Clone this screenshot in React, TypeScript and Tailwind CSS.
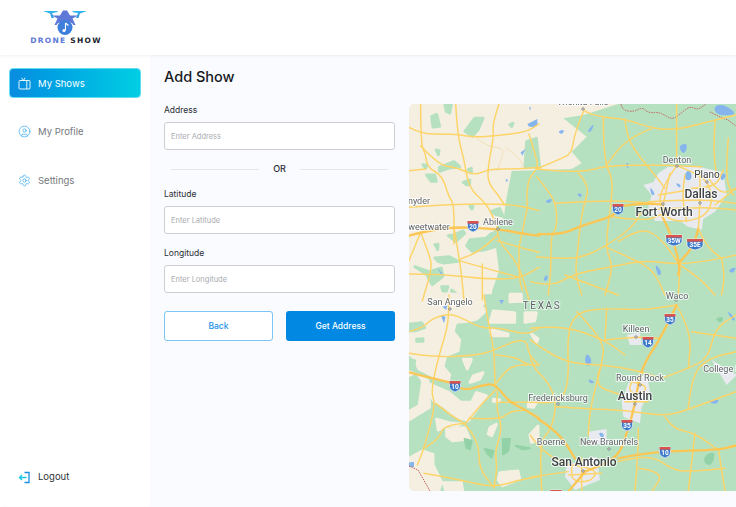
import { CircleUser, Settings } from "lucide-react";

// turns "M x y L x y..." point lists into rounded curves, closes blobs that end in Z
function smooth(d: string) {
  return d
    .split("M")
    .filter((part) => part.trim())
    .map((part) => {
      const closed = part.includes("Z");
      const nums = (part.match(/-?\d+(\.\d+)?/g) ?? []).map(Number);
      const pts: number[][] = [];
      for (let i = 0; i + 1 < nums.length; i += 2) pts.push([nums[i], nums[i + 1]]);
      if (closed) {
        const mid = (a: number[], b: number[]) => [(a[0] + b[0]) / 2, (a[1] + b[1]) / 2];
        const start = mid(pts[pts.length - 1], pts[0]);
        let out = `M${start[0]} ${start[1]}`;
        pts.forEach((p, i) => {
          const m = mid(p, pts[(i + 1) % pts.length]);
          out += `Q${p[0]} ${p[1]} ${m[0]} ${m[1]}`;
        });
        return out + "Z";
      }
      let out = `M${pts[0][0]} ${pts[0][1]}`;
      for (let i = 1; i < pts.length - 1; i++) {
        const mx = (pts[i][0] + pts[i + 1][0]) / 2;
        const my = (pts[i][1] + pts[i + 1][1]) / 2;
        out += `Q${pts[i][0]} ${pts[i][1]} ${mx} ${my}`;
      }
      const last = pts[pts.length - 1];
      return out + `L${last[0]} ${last[1]}`;
    })
    .join("");
}

// east half of the map, coords from the zoomed crops
const TOP_ROADS = [
  "M535 40L535 50L595 68L660 72L740 100L815 105L930 75L993 60",
  "M535 50L510 110L500 175L470 190L395 222",
  "M395 222L520 235L603 212L740 210L815 212L890 215",
  "M450 325L620 315L750 325",
  "M395 245L440 300L455 340L455 400L438 420L438 520L430 600",
  "M595 68L595 130L603 212L622 250L620 315L600 455L625 515L600 600",
  "M660 72L665 130L715 200L750 240L780 280",
  "M740 100L665 130L603 212",
  "M815 27L815 105L815 212",
  "M930 75L925 170L935 240",
  "M520 235L555 270L535 335L525 395L520 450L510 535L530 600",
  "M345 550L430 580L510 535L625 515L720 495L825 510L950 490L993 480",
  "M395 485L440 490L525 490L600 455L680 400L710 350",
  "M600 455L680 490L745 525L780 600",
  "M620 365L720 380L775 355",
  "M825 510L885 550L930 600",
  "M825 510L820 600",
  "M950 490L960 540L950 600",
  "M880 400L900 450L950 490",
  "M970 130L960 250L985 300",
  "M930 330L993 280",
  "M480 540L560 570L640 600",
  "M640 440L700 400L760 420L825 510",
];

// Dallas / Fort Worth knot, drawn on top of the grey city area
const DFW_ROADS = [
  "M840 240L830 300L845 380",
  "M795 235L780 300L770 360",
  "M730 320L885 312L993 325",
  "M885 225L885 330L880 400",
  "M730 345L885 335L993 345",
  "M815 212L775 270L760 330L790 375L850 380L905 360L925 310L905 255L860 230L815 212",
  "M905 240L940 300L993 280",
  "M860 280L930 280L955 225",
  "M760 300L850 285",
];

const TOP_HIGHWAYS = [
  "M400 417L465 420L530 392L620 365L640 345",
  "M640 335L700 325L770 328",
  "M770 360L800 420L825 510L820 540",
  "M880 400L870 450L825 500",
];

const BOTTOM_ROADS = [
  "M360 125L375 210L430 260L455 325L440 400L405 440L410 590",
  "M375 100L470 90L600 135L660 180",
  "M365 125L400 155L490 205L600 210L690 225L770 250",
  "M490 205L485 120L515 50L605 40L720 45L815 30",
  "M515 50L600 135L590 210L555 340L550 420",
  "M600 135L695 125L765 130",
  "M605 40L600 135",
  "M490 205L490 280L455 325L380 322",
  "M590 210L560 270L650 300",
  "M455 335L550 342L660 345L780 365L860 340L993 290",
  "M780 365L800 400L870 415L940 465",
  "M870 415L860 500L850 590",
  "M850 340L860 240L910 190L993 170",
  "M770 250L850 220L910 190L930 100L993 60",
  "M815 30L860 110L850 220",
  "M860 110L993 130",
  "M375 420L410 470L490 510",
  "M350 550L490 530",
  "M640 500L730 475L805 525L850 530L960 520",
  "M700 400L700 460L690 590",
  "M940 465L990 450",
  "M940 460L960 590",
  "M700 520L780 530L740 590",
  "M500 510L580 520L560 560L500 560L500 510",
  "M530 490L530 590",
  "M490 540L590 535",
  "M680 260L730 270L710 300L670 290L680 260",
  "M660 320L730 320",
];

const BOTTOM_HIGHWAYS = [
  "M400 372L460 410L510 490",
  "M640 490L730 470L940 465L993 452",
  "M815 30L770 125L720 200L700 260L690 330L670 400L640 490L540 530",
  "M490 590L540 530",
];

// west half, coords from crops anchored at x=409 and y=104 / y=295
const WEST_TOP_ROADS = [
  "M35 0L35 120L50 150L55 190L100 215L120 280L135 300L135 420",
  "M140 0L145 90L165 165L180 255L235 300L265 370",
  "M270 0L250 60L255 95L235 200L240 240L265 270L285 300",
  "M0 70L40 90L110 90L145 92L200 100L260 95L350 85L390 60",
  "M35 125L90 185L145 190L195 215L240 195L320 195L390 190",
  "M0 200L50 195",
  "M0 310L135 300L290 300L355 310L390 320",
  "M35 385L60 450L70 490L40 590",
  "M35 385L0 470",
  "M135 370L145 430L155 490L165 588",
  "M155 465L200 450L265 395",
  "M265 380L265 410L330 480L360 588",
  "M0 510L100 510L220 525L330 525L390 490",
  "M220 480L220 588",
  "M150 470L220 490L330 520",
  "M330 430L330 520L340 560",
  "M265 410L330 430L390 445",
  "M355 310L330 430",
  "M360 90L385 170L385 190",
  "M355 310L350 240L385 190",
];

const WEST_TOP_THIN = ["M200 100L235 130L290 130L265 200", "M290 130L330 160L345 190"];

const WEST_BOTTOM_ROADS = [
  "M225 0L235 70L255 160L258 270",
  "M120 0L120 40L115 100L90 180L65 290L80 330L45 460L25 510",
  "M0 110L40 100L70 70L125 55L170 75L220 100L270 98L350 120L390 100",
  "M0 175L80 188L210 180L255 165L350 125L360 180L390 210",
  "M260 180L320 185L355 210L390 210",
  "M80 325L130 365L170 385L210 450L210 520L255 578",
  "M170 385L210 335L265 280",
  "M258 270L290 225L325 210L355 210",
  "M265 290L262 340L275 380L275 420L258 470L265 520L255 578",
  "M170 385L105 390L90 430L45 460",
  "M180 370L275 375L300 350L350 345",
  "M390 322L270 322",
  "M45 535L130 550L255 578L330 555L390 545",
];

const WEST_TOP_HIGHWAYS = ["M0 395L35 385L130 368L270 375L345 390L390 395"];
const WEST_BOTTOM_HIGHWAYS = ["M0 232L70 250L135 265L165 288L240 265L265 275L300 320L350 345L390 370"];

const WATER = [
  "M372 92L392 72L400 92L385 98Z",
  "M545 110L570 82L558 112Z",
  "M458 108L480 103L470 120Z",
  "M818 152L850 143L838 182Z",
  "M836 240L855 220L862 252L845 258Z",
  "M416 322L440 308L440 324Z",
  "M513 295L532 296L528 310Z",
  "M662 203L672 205L668 224Z",
  "M733 272L752 298L740 302Z",
  "M748 503L772 530L760 547Z",
  "M413 552L430 536L426 562Z",
  "M943 233L967 238L950 262Z",
  "M968 527L995 513L985 537Z",
  "M1000 60L960 28L925 32L935 62Z",
  "M810 262L830 270L822 280Z",
];

const LABELS = [
  { x: 583, y: 105, t: "Wichita Falls", s: 9 },
  { x: 677, y: 163, t: "Denton", s: 9 },
  { x: 707, y: 178, t: "Plano", s: 10, c: "#3c4043" },
  { x: 701, y: 198, t: "Dallas", s: 12, c: "#3c4043", w: 500 },
  { x: 664, y: 216, t: "Fort Worth", s: 12, c: "#3c4043", w: 500 },
  { x: 419, y: 204, t: "nyder", s: 9 },
  { x: 429, y: 230, t: "weetwater", s: 9 },
  { x: 498, y: 225, t: "Abilene", s: 9 },
  { x: 450, y: 305, t: "San Angelo", s: 9 },
  { x: 677, y: 299, t: "Waco", s: 9 },
  { x: 636, y: 332, t: "Killeen", s: 9 },
  { x: 722, y: 372, t: "College S", s: 9 },
  { x: 640, y: 381, t: "Round Rock", s: 9 },
  { x: 635, y: 400, t: "Austin", s: 12, c: "#3c4043", w: 500 },
  { x: 558, y: 401, t: "Fredericksburg", s: 9 },
  { x: 551, y: 445, t: "Boerne", s: 9 },
  { x: 609, y: 445, t: "New Braunfels", s: 9 },
  { x: 584, y: 466, t: "San Antonio", s: 12, c: "#3c4043", w: 500 },
];

const SHIELDS = [
  { x: 473, y: 226, t: "20" },
  { x: 618, y: 209, t: "20" },
  { x: 674, y: 240, t: "35W", wide: true },
  { x: 695, y: 244, t: "35E", wide: true },
  { x: 670, y: 319, t: "35" },
  { x: 648, y: 342, t: "14" },
  { x: 627, y: 425, t: "35" },
  { x: 455, y: 386, t: "10" },
  { x: 665, y: 452, t: "10" },
  { x: 556, y: 495, t: "" },
];

const CITY_DOTS = [
  [583, 109],
  [677, 166],
  [707, 182],
  [700, 203],
  [663, 204],
  [498, 229],
  [450, 309],
  [676, 300],
  [636, 337],
  [640, 385],
  [635, 404],
  [558, 404],
  [609, 449],
  [583, 471],
];

const GREEN = "#b6e1c1";
const BEIGE = "#f5efe2";

function Shield({ x, y, t, wide }: { x: number; y: number; t: string; wide?: boolean }) {
  const w = wide ? 8 : 5.5;
  return (
    <g>
      <path
        d={`M${x - w} ${y - 5}H${x + w}V${y + 1}Q${x + w} ${y + 4} ${x} ${y + 6}Q${x - w} ${y + 4} ${x - w} ${y + 1}Z`}
        fill="#3a78c9"
        stroke="#fff"
        strokeWidth="0.6"
      />
      <rect x={x - w} y={y - 5} width={w * 2} height="2.6" fill="#d9534f" />
      <text
        x={x}
        y={y + 3}
        textAnchor="middle"
        fontSize="6.5"
        fontWeight="700"
        fill="#fff"
        fontFamily="Roboto, sans-serif"
      >
        {t}
      </text>
    </g>
  );
}

function RoadLayer({
  roads,
  highways,
  x = 405,
  y,
  clip,
}: {
  roads: string[];
  highways: string[];
  x?: number;
  y: number;
  clip?: string;
}) {
  return (
    <g clipPath={clip}>
      <g
        transform={`translate(${x} ${y}) scale(0.3333)`}
        fill="none"
        strokeLinejoin="round"
        strokeLinecap="round"
      >
        {roads.map((d, i) => (
          <path key={i} d={smooth(d)} stroke="#fcd468" strokeWidth="4.4" />
        ))}
        {highways.map((d, i) => (
          <path key={i} d={smooth(d)} stroke="#fbc653" strokeWidth="7" />
        ))}
      </g>
    </g>
  );
}

function TexasMap() {
  return (
    <svg viewBox="409 104 327 387" className="h-full w-full blur-[0.35px]">
      <defs>
        <clipPath id="east">
          <rect x="530" y="104" width="206" height="387" />
        </clipPath>
      </defs>
      <rect x="409" y="104" width="327" height="387" fill={BEIGE} />
      {/* green land, east part */}
      <g transform="translate(405 95) scale(0.3333)" fill={GREEN}>
        <path d="M640 27L535 60L475 70L545 125L500 170L530 205L500 222L320 228L303 318L297 366L252 426L273 456L282 528L261 588L261 600L1000 600L1000 27Z" />
      </g>
      <g transform="translate(405 295) scale(0.3333)" fill={GREEN}>
        <path d="M0 -2H1000V600H0Z" />
      </g>
      {/* west blotches on the upper half */}
      <g
        transform="translate(409 104) scale(0.3333)"
        fill={GREEN}
        stroke={GREEN}
        strokeWidth="9"
        strokeLinejoin="round"
      >
        <path d="M68 38L83 31L92 67L72 69ZM108 2L127 2L122 27L112 22ZM168 82L197 43L222 43L207 77L190 97ZM303 62L312 58L308 67ZM82 138L90 140L88 152ZM42 182L53 184L50 192ZM91 190L135 173L152 188L120 192L92 202ZM53 213L77 213L82 232L67 232ZM178 197L187 193L187 207ZM163 235L182 228L182 242L172 242ZM183 307L192 307L189 315ZM248 322L272 313L282 337L260 332Z" />
        <path d="M118 395L135 393L162 381L167 388L140 412ZM183 407L230 403L248 388L262 427L230 437L190 442L173 425ZM78 422L87 421L86 437ZM78 462L120 458L147 472L105 477L87 472ZM18 488L60 503L97 493L102 517L70 542L52 510ZM98 548L117 548L112 562L102 562ZM128 558L142 570L131 577ZM348 190L353 113L382 103L392 190Z" />
      </g>
      {/* beige on the lower half */}
      <g
        transform="translate(409 295) scale(0.3333)"
        fill={BEIGE}
        stroke={BEIGE}
        strokeWidth="9"
        strokeLinejoin="round"
      >
        <path d="M-5 -2L222 -2L227 50L203 72L175 79L140 82L132 110L152 135L147 167L110 182L102 215L122 240L117 259L100 252L70 242L30 222L15 190L-5 170Z" />
        <path d="M-5 228L57 257L62 337L-5 377ZM63 268L120 293L155 322L188 322L202 293L232 302L207 338L178 377L145 367L102 332L73 317L63 290ZM83 373L120 383L155 387L145 392L110 392L88 405Z" />
        <path d="M-5 493L40 468L72 478L72 510L97 560L87 595L-5 595ZM113 403L167 398L182 432L130 437L113 423ZM163 193L187 193L175 222ZM193 243L222 233L212 252L183 262ZM243 398L262 388L248 422L238 417ZM273 533L327 528L332 552L280 572L268 555ZM103 563L157 563L162 595L113 595Z" />
        <path d="M243 103L297 117L297 122L248 122ZM253 48L317 53L317 82L243 82ZM303 -2L337 -2L337 22L303 22ZM348 53L382 53L377 77L348 82ZM368 118L387 131L383 142ZM253 313L272 315L268 319L253 319ZM358 323L382 323L373 337L358 335ZM363 420L387 393L387 437L367 442Z" />
      </g>
      <g
        transform="translate(409 295) scale(0.3333)"
        fill={GREEN}
        stroke={GREEN}
        strokeWidth="9"
        strokeLinejoin="round"
      >
        <path d="M-5 88L38 83L47 98L20 107L-5 107ZM23 133L42 131L42 139L23 139ZM-5 193L17 197L15 212L-5 217ZM-5 253L20 243L32 260L22 327L-5 342ZM228 33L337 28L337 42L240 37Z" />
      </g>
      <g
        transform="translate(409 295) scale(0.3333)"
        fill="#93d2a6"
        stroke="#93d2a6"
        strokeWidth="6"
        strokeLinejoin="round"
      >
        <path d="M282 432L303 432L298 468L282 478ZM227 462L253 467L248 488L237 478ZM320 452L363 460L340 463ZM167 432L188 437L183 463L172 458Z" />
      </g>
      <g transform="translate(405 295) scale(0.3333)" fill="#93d2a6">
        <path d={smooth("M898 480L932 468L922 512L898 507ZM928 70L957 63L950 87Z")} />
      </g>
      {/* city areas */}
      <g transform="translate(405 95) scale(0.3333)" fill="#e9eaef">
        <path d="M715 270L745 262L760 235L790 215L880 215L955 232L965 300L930 350L895 372L890 405L850 395L825 378L750 378L730 335L740 300Z" />
      </g>
      <g transform="translate(405 295) scale(0.3333)" fill="#e9eaef">
        <path d="M670 265L725 235L735 290L710 335L705 385L655 365L650 320ZM665 120L705 112L710 150L675 150ZM485 510L575 485L585 555L510 585L480 545ZM550 410L605 402L605 448L555 448ZM920 195L995 240L965 270Z" />
      </g>
      <g transform="translate(405 95) scale(0.3333)" fill="#86b5ee">
        {WATER.map((d, i) => (
          <path key={i} d={smooth(d)} />
        ))}
      </g>
      <g transform="translate(405 295) scale(0.3333)" fill="#86b5ee">
        <path d={smooth("M545 172L562 195L552 218L538 200ZM548 250L572 262L555 267ZM903 315L947 313L930 330ZM578 413L597 413L595 434ZM963 43L992 70L985 82Z")} />
      </g>
      <g transform="translate(409 295) scale(0.3333)" fill="#86b5ee">
        <path d="M100 35L115 30L112 45ZM95 60L110 65L105 85ZM270 15L285 15L278 28ZM-2 503L15 500L15 516L-2 516Z" />
      </g>
      <g transform="translate(409 104) scale(0.3333)" fill="#86b5ee">
        <path d="M355 60L385 45L385 65L360 68ZM335 145L350 135L340 155ZM290 225L298 228L292 235ZM85 490L105 515L95 510ZM360 10L366 10L364 20Z" />
      </g>
      {/* state line */}
      <path
        d={smooth("M621 104L622 110L634 112L642 107L648 113L660 112L672 120L680 114L690 106L698 110L706 104")}
        fill="none"
        stroke="#c5605f"
        strokeWidth="1"
        strokeDasharray="1.5 1"
      />
      <path
        d="M710 112L720 117L728 120L736 126"
        fill="none"
        stroke="#c5605f"
        strokeWidth="1"
        strokeDasharray="1.5 1"
      />
      <path d="M409 466L418 470L426 484L430 491" fill="none" stroke="#c5605f" strokeWidth="1" strokeDasharray="1.5 1" />
      <RoadLayer roads={TOP_ROADS} highways={TOP_HIGHWAYS} y={95} clip="url(#east)" />
      <RoadLayer roads={DFW_ROADS} highways={[]} y={95} />
      <RoadLayer roads={BOTTOM_ROADS} highways={BOTTOM_HIGHWAYS} y={295} clip="url(#east)" />
      <g transform="translate(409 104) scale(0.3333)" fill="none" strokeLinecap="round">
        {WEST_TOP_THIN.map((d, i) => (
          <path key={i} d={smooth(d)} stroke="#f1dcae" strokeWidth="2.5" />
        ))}
      </g>
      <RoadLayer roads={WEST_TOP_ROADS} highways={WEST_TOP_HIGHWAYS} x={409} y={104} />
      <RoadLayer roads={WEST_BOTTOM_ROADS} highways={WEST_BOTTOM_HIGHWAYS} x={409} y={295} />
      {CITY_DOTS.map(([cx, cy]) => (
        <circle key={`${cx}-${cy}`} cx={cx} cy={cy} r="1.2" fill="#fff" stroke="#444" strokeWidth="0.6" />
      ))}
      <text
        x="542"
        y="309"
        textAnchor="middle"
        fontSize="10"
        letterSpacing="1.6"
        fontFamily="Roboto, sans-serif"
        fill="#5f6368"
        stroke="#ffffff"
        strokeOpacity="0.6"
        strokeWidth="2"
        paintOrder="stroke"
      >
        TEXAS
      </text>
      {LABELS.map((l) => (
        <text
          key={l.t}
          x={l.x}
          y={l.y}
          textAnchor="middle"
          fontSize={l.s}
          fontWeight={l.w ?? 400}
          fontFamily="Roboto, sans-serif"
          fill={l.c ?? "#5f6368"}
          stroke="#ffffff"
          strokeOpacity="0.75"
          strokeWidth="2"
          paintOrder="stroke"
        >
          {l.t}
        </text>
      ))}
      {SHIELDS.map((s, i) => (
        <Shield key={i} {...s} />
      ))}
    </svg>
  );
}

function Logo() {
  return (
    <div className="flex w-[72px] flex-col items-center">
      <svg viewBox="43 9 44 27" className="ml-[-2px] h-[27px] w-[44px]">
        <path d="M43 11H57.5V12L50 13.5Z" fill="#2fb4ee" />
        <path d="M72.5 11H87L80 13.5L72.5 12Z" fill="#2fb4ee" />
        <path d="M50 13L52 13L54 18L51.5 18Z" fill="#2f9fe6" />
        <path d="M78 13L80 13L78.5 18L76 18Z" fill="#2f9fe6" />
        <path
          d="M52 15.5L60 15.5L63 10.5H67L70 15.5L78 15.5L72.5 18.5L75.5 25H73.5C71 20 59 20 56.5 25H54.5L57.5 18.5Z"
          fill="#5d78d6"
        />
        <circle cx="65" cy="27.5" r="7.5" fill="#3f7fdc" />
        <path d="M65.5 23V30" stroke="#fff" strokeWidth="1.1" />
        <circle cx="64" cy="30.5" r="1.6" fill="#fff" />
        <path d="M65.5 23L68.5 25.5" stroke="#fff" strokeWidth="1.1" />
      </svg>
      <p className="whitespace-nowrap font-['DejaVu_Sans'] text-[7.5px] leading-[9px] font-bold tracking-[1.3px]">
        <span className="text-[#5d78d6]">DRONE </span>
        <span className="text-[#20242c]">SHOW</span>
      </p>
    </div>
  );
}

function TvIcon() {
  return (
    <svg viewBox="0 0 13 13" className="h-[13px] w-[13px]" fill="none" stroke="#ffffff" strokeWidth="0.9">
      <rect x="1" y="3.5" width="11" height="8.5" rx="1" />
      <path d="M8.8 3.5V12M3.5 0.8L5.5 3.5L7 0.8" />
    </svg>
  );
}

function LogoutIcon() {
  return (
    <svg viewBox="0 0 13 13" className="h-[13px] w-[13px]" fill="none" strokeWidth="1.3">
      <path d="M6.5 1.5H11V11.5H6.5" stroke="#1b8fe2" />
      <path d="M8.5 6.5H1.5M4 4L1.5 6.5L4 9" stroke="#12c6e6" />
    </svg>
  );
}

function Field({ label, placeholder }: { label: string; placeholder: string }) {
  return (
    <div>
      <label className="block text-[8.5px] leading-[12px] text-[#2b2f36]">{label}</label>
      <input
        readOnly
        placeholder={placeholder}
        className="mt-[6px] block h-[28px] w-full rounded-[3px] border border-[#cdcfd3] bg-white px-[6px] text-[7.5px] outline-none placeholder:text-[#a9abb0]"
      />
    </div>
  );
}

export default function App() {
  return (
    <div className="flex h-[507px] w-[736px] flex-col overflow-hidden bg-white font-['Inter',sans-serif]">
      <header className="relative z-10 flex h-[55px] shrink-0 items-start bg-white pt-[9px] pl-[30px] shadow-[0_1px_3px_rgba(0,0,0,0.06)]">
        <Logo />
      </header>
      <div className="flex min-h-0 flex-1">
        <aside className="flex h-[451px] w-[150px] shrink-0 flex-col bg-white px-[9px] pt-[13px] pb-[22px] shadow-[1px_0_3px_rgba(0,0,0,0.04)]">
          <nav className="flex flex-1 flex-col gap-[18.5px] text-[9.5px] text-[#74777d]">
            <a className="flex h-[30px] items-center gap-[7px] rounded-[4px] border border-[#5fdcf0] bg-gradient-to-r from-[#0a8ce0] to-[#00cee3] pl-[8px] text-white">
              <TvIcon />
              <span className="translate-y-[1px]">My Shows</span>
            </a>
            <a className="flex h-[30px] items-center gap-[7px] pl-[9px]">
              <CircleUser size={13} strokeWidth={1.2} className="text-[#22a3ec]" />
              <span className="translate-y-[1px]">My Profile</span>
            </a>
            <a className="flex h-[30px] items-center gap-[7px] pl-[9px]">
              <Settings size={13} strokeWidth={1.2} className="text-[#22a3ec]" />
              <span className="translate-y-[1px]">Settings</span>
            </a>
          </nav>
          <a className="flex h-[14px] items-center gap-[7px] pl-[9px] text-[9.5px] text-[#2f3238]">
            <LogoutIcon />
            Logout
          </a>
        </aside>
        <main className="min-w-0 flex-1 bg-[#fafbff] pt-[12px] pl-[14px]">
          <h1 className="text-[14.5px] leading-[20px] font-medium text-[#17191d]">Add Show</h1>
          <div className="mt-[17px] flex gap-[14px]">
            <form className="w-[231px] shrink-0">
              <Field label="Address" placeholder="Enter Address" />
              <div className="my-[13px] flex items-center gap-[14px] px-[7px] text-[9px] leading-[12px] font-medium text-[#2b2f36]">
                <span className="h-px flex-1 bg-[#e4e6ea]" />
                OR
                <span className="h-px flex-1 bg-[#e4e6ea]" />
              </div>
              <Field label="Latitude" placeholder="Enter Latitude" />
              <div className="mt-[13px]">
                <Field label="Longitude" placeholder="Enter Longitude" />
              </div>
              <div className="mt-[18px] flex gap-[13px]">
                <button
                  type="button"
                  className="h-[30px] w-[109px] rounded-[3px] border border-[#7cc5f5] bg-white text-[8.5px] font-medium text-[#1c91e6]"
                >
                  Back
                </button>
                <button
                  type="button"
                  className="h-[30px] w-[109px] rounded-[3px] bg-[#0088e2] text-[8.5px] font-medium text-white"
                >
                  Get Address
                </button>
              </div>
            </form>
            <div className="h-[387px] flex-1 overflow-hidden rounded-l-[5px]">
              <TexasMap />
            </div>
          </div>
        </main>
      </div>
    </div>
  );
}
